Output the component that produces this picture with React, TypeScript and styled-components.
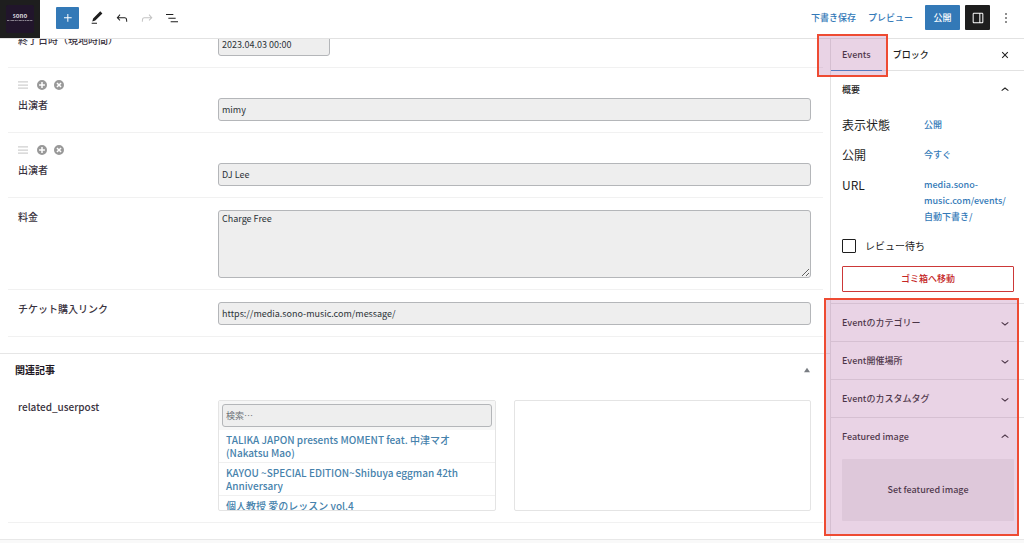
import React, { useState } from 'react';
import styled, { createGlobalStyle, css } from 'styled-components';

const GlobalStyle = createGlobalStyle`
  *, *::before, *::after { box-sizing: border-box; }
  html { background: #f9f9f9; }
  body {
    margin: 0;
    color: #3a3340;
    font-family: "Noto Sans CJK JP", "Noto Sans", sans-serif;
    font-size: 10px;
    font-weight: 500;
    line-height: 14px;
    overflow: hidden;
  }
  button, input, textarea { font: inherit; color: inherit; margin: 0; }
  button { cursor: pointer; }
  a { color: #3379b7; text-decoration: none; }
  h2, h3, p, ul, dl, dd, dt { margin: 0; padding: 0; font: inherit; }
`;

const Svg = styled.svg<{ $size: number }>`
  display: block;
  flex: none;
  width: ${(p) => p.$size}px;
  height: ${(p) => p.$size}px;
  fill: currentColor;
`;

const paths = {
  plus: 'M11 12.5V17.5H12.5V12.5H17.5V11H12.5V6H11V11H6V12.5H11Z',
  pencil: 'M20.1 5.1L16.9 2 6.2 12.7l-1.3 4.4 4.5-1.3L20.1 5.1zM4 20.8h8v-1.5H4v1.5z',
  undo: 'M18.3 11.7c-.6-.6-1.4-.9-2.3-.9H6.7l2.9-3.3-1.1-1-4.5 5L8.5 16l1-1-2.7-2.7H16c.5 0 .9.2 1.3.5 1 1 1 3.4 1 4.5v.3h1.5v-.2c0-1.5 0-4.3-1.5-5.7z',
  redo: 'M15.6 6.5l-1.1 1 2.9 3.3H8c-.9 0-1.7.3-2.3.9-1.4 1.5-1.4 4.2-1.4 5.6v.2h1.5v-.3c0-1.1 0-3.5 1-4.5.3-.3.7-.5 1.3-.5h9.2L14.5 15l1.1 1.1 4.6-4.6-4.6-5z',
  outline: 'M3 6h11v1.5H3V6Zm3.5 5.5h11V13h-11v-1.5ZM21 17H10v1.5h11V17Z',
  up: 'M6.5 12.4L12 8l5.5 4.4-.9 1.2L12 10l-4.5 3.6-1-1.2z',
  down: 'M17.5 11.6L12 16l-5.5-4.4.9-1.2L12 14l4.5-3.6 1 1.2z',
  drawer: 'M18 4H6c-1.1 0-2 .9-2 2v12c0 1.1.9 2 2 2h12c1.1 0 2-.9 2-2V6c0-1.1-.9-2-2-2zm-4 14.5H6c-.3 0-.5-.2-.5-.5V6c0-.3.2-.5.5-.5h8v13zm4.5-.5c0 .3-.2.5-.5.5h-2.5v-13H18c.3 0 .5.2.5.5v12z',
  more: 'M13 19h-2v-2h2v2zm0-6h-2v-2h2v2zm0-6h-2V5h2v2z',
  close: 'M12 13.06l3.71 3.71 1.06-1.06L13.06 12l3.71-3.71-1.06-1.06L12 10.94 8.29 7.23 7.23 8.29 10.94 12l-3.71 3.71 1.06 1.06z',
  drag: 'M0 3h24v3H0zM0 10.5h24v3H0zM0 18h24v3H0z',
  add: 'M12 0a12 12 0 1 0 0 24 12 12 0 0 0 0-24zM10.2 5h3.6v5.2H19v3.6h-5.2V19h-3.6v-5.2H5v-3.6h5.2z',
  remove: 'M12 0a12 12 0 1 0 0 24 12 12 0 0 0 0-24zM8.3 5.8L12 9.5l3.7-3.7 2.5 2.5-3.7 3.7 3.7 3.7-2.5 2.5-3.7-3.7-3.7 3.7-2.5-2.5L9.5 12 5.8 8.3z',
  triangle: 'M12 5L21 19H3z',
};

const Icon = ({ name, size = 16 }: { name: keyof typeof paths; size?: number }) => (
  <Svg viewBox="0 0 24 24" $size={size} aria-hidden="true">
    <path d={paths[name]} fillRule="evenodd" />
  </Svg>
);

/* ---------- top bar ---------- */

const TopBar = styled.header`
  display: flex;
  align-items: center;
  height: 39px;
  padding-right: 10px;
  background: #fff;
  border-bottom: 1px solid #e2e2e2;
`;

const SiteLogo = styled.a`
  display: grid;
  place-items: center;
  align-self: stretch;
  width: 40px;
  background: #1e1e1e;
`;

const LogoArt = styled.svg`
  display: block;
  width: 28px;
  height: 28px;
  border-radius: 2px;
`;

const Tools = styled.div`
  display: flex;
  align-items: center;
  gap: 9px;
  margin-left: 16px;
  padding-bottom: 2px;
`;

const IconButton = styled.button<{ $tone?: 'primary' | 'dark' }>`
  display: grid;
  place-items: center;
  flex: none;
  width: 16px;
  height: 16px;
  padding: 0;
  border: 0;
  border-radius: 1px;
  background: none;
  color: #1e1e1e;
  &:disabled { color: #c4c4c4; }
  ${(p) => p.$tone === 'primary' && css`
    width: 23px;
    height: 22px;
    margin-right: 1px;
    background: #3379b7;
    color: #fff;
  `}
  ${(p) => p.$tone === 'dark' && css`
    width: 25px;
    height: 25px;
    background: #1e1e1e;
    color: #fff;
  `}
`;

const Actions = styled.div`
  display: flex;
  align-items: center;
  margin-left: auto;
  padding-bottom: 3px;
`;

const TextButton = styled.button`
  padding: 0;
  margin-right: 12px;
  border: 0;
  background: none;
  color: #3379b7;
  font-size: 9px;
`;

const PublishButton = styled.button`
  width: 35px;
  height: 25px;
  padding: 0;
  margin-right: 5px;
  border: 0;
  border-radius: 1px;
  background: #3379b7;
  color: #fff;
  font-size: 9px;
`;

const MoreSlot = styled.div`
  padding-left: 8px;
`;

/* ---------- page frame ---------- */

const Workspace = styled.div`
  display: grid;
  grid-template-columns: minmax(0, 1fr) 194px;
  background: #fff;
  border-bottom: 1px solid #e8e8e8;
`;

const Main = styled.main`
  overflow: hidden;
`;

const FieldList = styled.div<{ $scrolled?: boolean }>`
  margin-top: ${(p) => (p.$scrolled ? '-18px' : '0')};
  padding: 0 7px 16px 8px;
`;

const Row = styled.div`
  padding: 12px 12px 11px 10px;
  border-bottom: 1px solid #f1f1f1;
`;

const RowTools = styled.div`
  display: flex;
  align-items: flex-start;
  gap: 7px;
  height: 18px;
`;

const RowTool = styled.button<{ $faint?: boolean }>`
  padding: 0;
  border: 0;
  margin-right: ${(p) => (p.$faint ? '2px' : '0')};
  background: none;
  color: ${(p) => (p.$faint ? '#cfcfcf' : '#999')};
`;

const FieldGrid = styled.div`
  display: grid;
  grid-template-columns: 200px minmax(0, 1fr);
  align-items: start;
`;

const fieldBox = css`
  display: block;
  width: 100%;
  border: 1px solid #b4b6b9;
  border-radius: 3px;
  background: #eee;
  color: #2c3338;
  font-size: 9px;
  font-weight: 400;
  outline: 0;
  padding: 0 3px;
`;

const TextInput = styled.input<{ $short?: boolean }>`
  ${fieldBox}
  height: 23px;
  ${(p) => p.$short && css`width: 112px;`}
  &::placeholder { color: #6d7278; opacity: 1; }
`;

const TextArea = styled.textarea`
  ${fieldBox}
  height: 68px;
  padding-top: 1px;
  resize: vertical;
`;

const Section = styled.section`
  border-top: 1px solid #e6e6e6;
`;

const SectionHead = styled.div`
  display: flex;
  align-items: center;
  justify-content: space-between;
  height: 34px;
  padding: 0 19px 3px 15px;
`;

const SectionTitle = styled.h2`
  color: #1e1723;
  font-size: 10px;
  font-weight: 700;
`;

const Toggle = styled.button`
  padding: 0;
  border: 0;
  background: none;
  color: #787c82;
`;

const Picker = styled.div`
  display: grid;
  grid-template-columns: 15fr 16fr;
  gap: 18px;
`;

const PickerBox = styled.div`
  height: 111px;
  overflow: hidden;
  border: 1px solid #e4e4e4;
  border-radius: 2px;
`;

const PickerSearch = styled.div`
  padding: 3px;
  background: #f6f6f6;
`;

const Choices = styled.ul`
  list-style: none;
`;

const Choice = styled.li`
  padding: 3px 7px;
  border-bottom: 1px solid #f0f0f0;
  line-height: 13px;
  a { color: #4682ac; }
`;

/* ---------- settings sidebar ---------- */

const Sidebar = styled.aside`
  border-left: 1px solid #e2e2e2;
  color: #1e1e1e;
  font-size: 9px;
`;

const Tabs = styled.div`
  display: flex;
  align-items: stretch;
  height: 32px;
  padding-right: 11px;
  border-bottom: 1px solid #e2e2e2;
`;

const TabSlot = styled.div`
  position: relative;
  display: flex;
`;

const Tab = styled.button<{ $active?: boolean }>`
  padding: 0 11px;
  border: 0;
  background: none;
  box-shadow: ${(p) => (p.$active ? '0 1px #2f80c8' : 'none')};
`;

const CloseSlot = styled.div`
  display: flex;
  align-items: center;
  margin-left: auto;
`;

const Highlight = styled.div<{ $area: 'tab' | 'panels' }>`
  position: absolute;
  inset: ${(p) => (p.$area === 'tab' ? '-5px -6px -7px -14px' : '-5px 5px 3px -7px')};
  z-index: 2;
  border: 2px solid #ee4b33;
  background: rgba(182, 108, 168, 0.3);
  pointer-events: none;
`;

const PanelGroup = styled.div`
  position: relative;
`;

const Panel = styled.section<{ $ruled?: boolean }>`
  border-top: ${(p) => (p.$ruled ? '1px solid #e4e4e4' : '0')};
`;

const PanelToggle = styled.button`
  display: flex;
  align-items: center;
  justify-content: space-between;
  width: 100%;
  height: 37px;
  padding: 0 11px;
  border: 0;
  background: none;
  text-align: left;
`;

const PanelBody = styled.div<{ $last?: boolean }>`
  padding: ${(p) => (p.$last ? '4px 10px 18px 11px' : '9px 10px 11px 11px')};
`;

const Summary = styled.dl`
  display: grid;
  grid-template-columns: 82px minmax(0, 1fr);
  row-gap: 14px;
  line-height: 16px;
  dt { font-size: 12px; font-weight: 400; }
`;

const CheckRow = styled.label`
  display: flex;
  align-items: center;
  gap: 9px;
  margin-top: 14px;
`;

const Checkbox = styled.input`
  appearance: none;
  width: 14px;
  height: 14px;
  border: 1px solid #1e1e1e;
  border-radius: 1px;
  background: #fff;
  &:checked { background: #3379b7; }
`;

const CheckText = styled.span`
  font-size: 10px;
  font-weight: 400;
`;

const TrashButton = styled.button`
  display: block;
  width: 100%;
  height: 26px;
  margin-top: 13px;
  padding: 0;
  border: 1px solid #cc3838;
  border-radius: 1px;
  background: none;
  color: #c52626;
`;

const ImageButton = styled.button`
  display: block;
  width: 100%;
  height: 62px;
  border: 0;
  border-radius: 1px;
  background: #f0f0f0;
`;

const Repeatable = ({ id, value }: { id: string; value: string }) => (
  <Row>
    <RowTools>
      <RowTool type="button" aria-label="並べ替え" $faint><Icon name="drag" size={10} /></RowTool>
      <RowTool type="button" aria-label="追加"><Icon name="add" size={10} /></RowTool>
      <RowTool type="button" aria-label="削除"><Icon name="remove" size={10} /></RowTool>
    </RowTools>
    <FieldGrid>
      <label htmlFor={id}>出演者</label>
      <TextInput id={id} defaultValue={value} />
    </FieldGrid>
  </Row>
);

const closedPanels = ['Eventのカテゴリー', 'Event開催場所', 'Eventのカスタムタグ'];

const choices = [
  'TALIKA JAPON presents MOMENT feat. 中津マオ (Nakatsu Mao)',
  'KAYOU ~SPECIAL EDITION~Shibuya eggman 42th Anniversary',
  '個人教授 愛のレッスン vol.4',
];

export default function App() {
  const [review, setReview] = useState(false);
  return (
    <>
      <GlobalStyle />
      <TopBar>
        <SiteLogo href="#" aria-label="sono">
          <LogoArt viewBox="0 0 28 28">
            <rect width="28" height="28" fill="#21152b" />
            <text x="14" y="13" textAnchor="middle" fontSize="6" fontWeight="700" fill="#d8d4dc">sono</text>
            <path d="M1 15.5h26" stroke="#8a8490" strokeWidth="1" strokeDasharray="2 .6 1 .5 3 .6" />
          </LogoArt>
        </SiteLogo>
        <Tools>
          <IconButton type="button" $tone="primary" aria-label="ブロック挿入"><Icon name="plus" /></IconButton>
          <IconButton type="button" aria-label="ツール"><Icon name="pencil" /></IconButton>
          <IconButton type="button" aria-label="元に戻す"><Icon name="undo" /></IconButton>
          <IconButton type="button" aria-label="やり直す" disabled><Icon name="redo" /></IconButton>
          <IconButton type="button" aria-label="リスト表示"><Icon name="outline" /></IconButton>
        </Tools>
        <Actions>
          <TextButton type="button">下書き保存</TextButton>
          <TextButton type="button">プレビュー</TextButton>
          <PublishButton type="button">公開</PublishButton>
          <IconButton type="button" $tone="dark" aria-label="設定"><Icon name="drawer" /></IconButton>
          <MoreSlot>
            <IconButton type="button" aria-label="オプション"><Icon name="more" /></IconButton>
          </MoreSlot>
        </Actions>
      </TopBar>

      <Workspace>
        <Main>
          <FieldList $scrolled>
            <Row>
              <FieldGrid>
                <label htmlFor="end">終了日時（現地時間）</label>
                <TextInput id="end" $short defaultValue="2023.04.03 00:00" />
              </FieldGrid>
            </Row>
            <Repeatable id="artist-1" value="mimy" />
            <Repeatable id="artist-2" value="DJ Lee" />
            <Row>
              <FieldGrid>
                <label htmlFor="price">料金</label>
                <TextArea id="price" defaultValue="Charge Free" />
              </FieldGrid>
            </Row>
            <Row>
              <FieldGrid>
                <label htmlFor="ticket">チケット購入リンク</label>
                <TextInput id="ticket" defaultValue="https://media.sono-music.com/message/" />
              </FieldGrid>
            </Row>
          </FieldList>

          <Section>
            <SectionHead>
              <SectionTitle>関連記事</SectionTitle>
              <Toggle type="button" aria-label="パネルを閉じる"><Icon name="triangle" size={8} /></Toggle>
            </SectionHead>
            <FieldList>
              <Row>
                <FieldGrid>
                  <label htmlFor="related">related_userpost</label>
                  <Picker>
                    <PickerBox>
                      <PickerSearch>
                        <TextInput id="related" placeholder="検索…" />
                      </PickerSearch>
                      <Choices>
                        {choices.map((c) => (
                          <Choice key={c}><a href="#">{c}</a></Choice>
                        ))}
                      </Choices>
                    </PickerBox>
                    <PickerBox />
                  </Picker>
                </FieldGrid>
              </Row>
            </FieldList>
          </Section>
        </Main>

        <Sidebar>
          <Tabs>
            <TabSlot>
              <Tab type="button" $active>Events</Tab>
              <Highlight $area="tab" />
            </TabSlot>
            <TabSlot>
              <Tab type="button">ブロック</Tab>
            </TabSlot>
            <CloseSlot>
              <IconButton type="button" aria-label="閉じる"><Icon name="close" /></IconButton>
            </CloseSlot>
          </Tabs>

          <Panel>
            <PanelToggle type="button">概要<Icon name="up" /></PanelToggle>
            <PanelBody>
              <Summary>
                <dt>表示状態</dt>
                <dd><a href="#">公開</a></dd>
                <dt>公開</dt>
                <dd><a href="#">今すぐ</a></dd>
                <dt>URL</dt>
                <dd><a href="#">media.sono-<wbr />music.com/events/<wbr />自動下書き/</a></dd>
              </Summary>
              <CheckRow>
                <Checkbox type="checkbox" checked={review} onChange={(e) => setReview(e.target.checked)} />
                <CheckText>レビュー待ち</CheckText>
              </CheckRow>
              <TrashButton type="button">ゴミ箱へ移動</TrashButton>
            </PanelBody>
          </Panel>

          <PanelGroup>
            {closedPanels.map((title) => (
              <Panel key={title} $ruled>
                <PanelToggle type="button">{title}<Icon name="down" /></PanelToggle>
              </Panel>
            ))}
            <Panel $ruled>
              <PanelToggle type="button">Featured image<Icon name="up" /></PanelToggle>
              <PanelBody $last>
                <ImageButton type="button">Set featured image</ImageButton>
              </PanelBody>
            </Panel>
            <Highlight $area="panels" />
          </PanelGroup>
        </Sidebar>
      </Workspace>
    </>
  );
}
